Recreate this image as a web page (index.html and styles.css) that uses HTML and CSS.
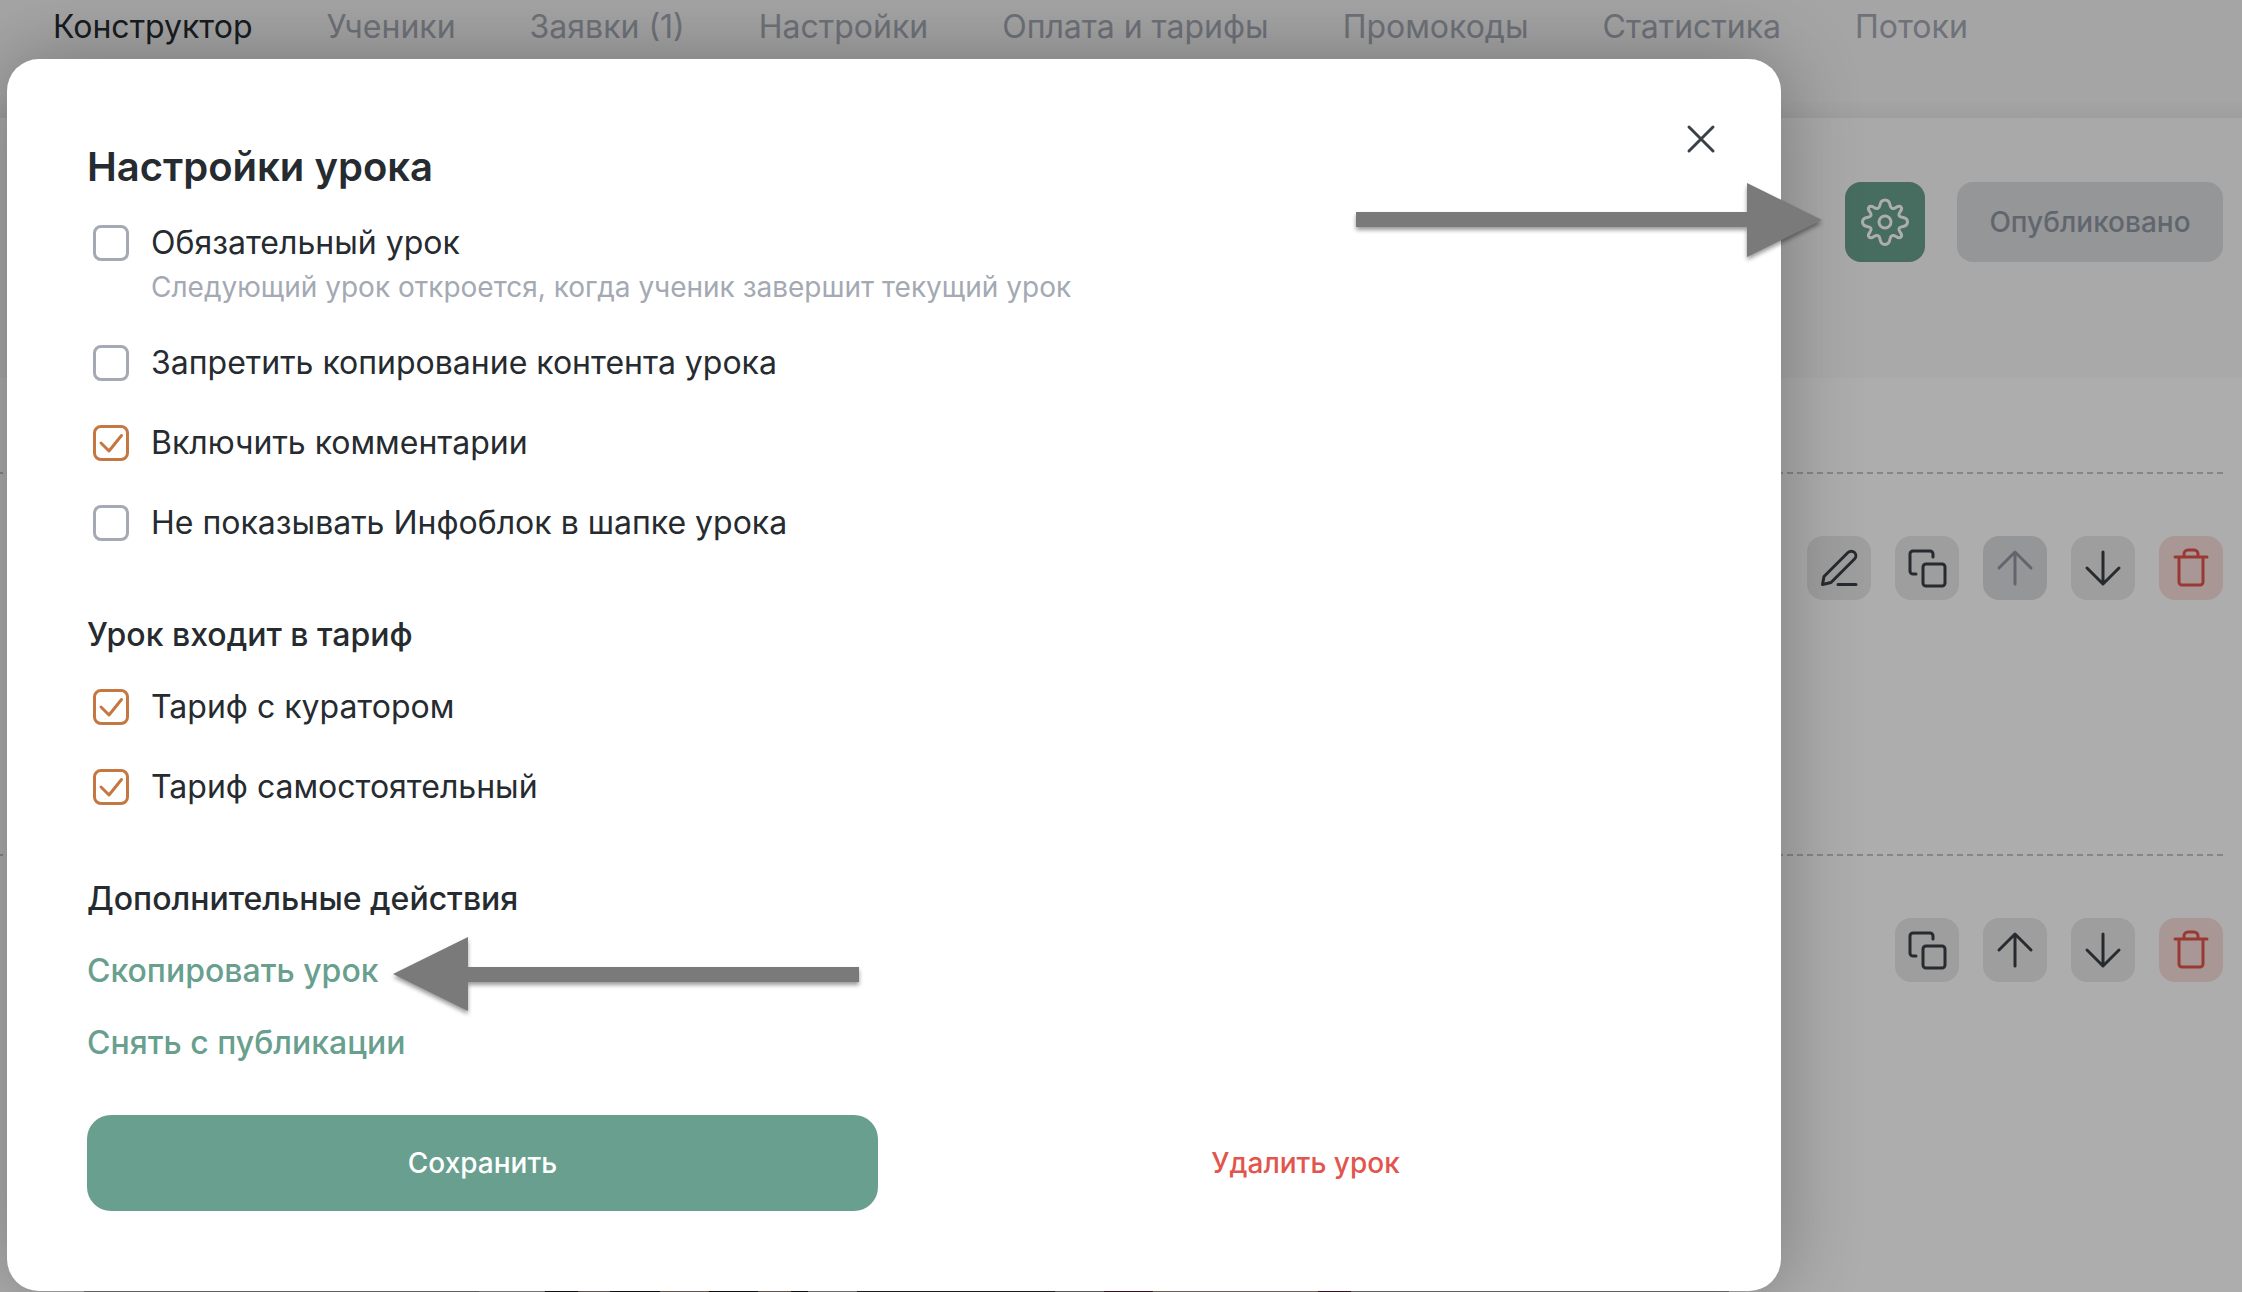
FILE: index.html
```
<!DOCTYPE html>
<html lang="ru">
<head>
<meta charset="UTF-8">
<meta name="viewport" content="width=device-width, initial-scale=1.0">
<title>Настройки урока</title>
<link rel="stylesheet" href="styles.css">
</head>
<body>

<!-- Icons -->
<svg class="sprite" aria-hidden="true">
  <symbol id="i-edit" viewBox="0 0 40 40">
    <path d="M3.500 36.500 L5 28.500 L29 4.500 C30.800 2.700 33.700 2.700 35.500 4.500 C37.300 6.300 37.300 9.200 35.500 11 L12 34.500 Z M19 36.500 H37"/>
  </symbol>
  <symbol id="i-copy" viewBox="0 0 40 40">
    <path d="M26 9 V6 a3 3 0 0 0 -3 -3 H6 a3 3 0 0 0 -3 3 V23 a3 3 0 0 0 3 3 H9"/>
    <rect x="16" y="16" width="22" height="22" rx="3"/>
  </symbol>
  <symbol id="i-up" viewBox="0 0 40 40">
    <path d="M20 36 V4 M4 20 L20 4 L36 20"/>
  </symbol>
  <symbol id="i-down" viewBox="0 0 40 40">
    <path d="M20 4 V36 M4 20 L20 36 L36 20"/>
  </symbol>
  <symbol id="i-trash" viewBox="0 0 40 40">
    <path d="M4 9 H36 M8 9 V34 a3 3 0 0 0 3 3 H29 a3 3 0 0 0 3 -3 V9 M13 9 V6 a4 4 0 0 1 4 -4 H23 a4 4 0 0 1 4 4 V9"/>
  </symbol>
</svg>

<div class="page">
  <nav class="tabs">
    <a href="#" class="tab active">Конструктор</a>
    <a href="#" class="tab">Ученики</a>
    <a href="#" class="tab">Заявки (1)</a>
    <a href="#" class="tab">Настройки</a>
    <a href="#" class="tab">Оплата и тарифы</a>
    <a href="#" class="tab">Промокоды</a>
    <a href="#" class="tab">Статистика</a>
    <a href="#" class="tab">Потоки</a>
  </nav>

  <div class="lesson-bar">
    <button type="button" class="gear" aria-label="Настройки">
      <svg viewBox="0 0 48 48">
        <path d="M24 2 C27 2 28.500 4 29 7 C29.600 10.500 32 11.500 35 9.500 C37.500 7.800 39.200 8.300 40 9 C40.800 9.800 41 11.500 39 14 C37 17 37.700 18.800 41 19.300 C44.500 19.800 46.500 21.500 46.500 24 C46.500 26.500 44.500 28.200 41 28.700 C37.700 29.200 37 31 39 34 C41 36.500 40.800 38.200 40 39 C39.200 39.800 37.500 40.200 35 38.500 C32 36.500 29.600 37.500 29 41 C28.500 44.500 27 46.500 24 46.500 C21 46.500 19.500 44.500 19 41 C18.400 37.500 16 36.500 13 38.500 C10.500 40.200 8.800 39.800 8 39 C7.200 38.200 7 36.500 9 34 C11 31 10.300 29.200 7 28.700 C3.500 28.200 1.500 26.500 1.500 24 C1.500 21.500 3.500 19.800 7 19.300 C10.300 18.800 11 17 9 14 C7 11.500 7.200 9.800 8 9 C8.800 8.300 10.500 7.800 13 9.500 C16 11.500 18.400 10.500 19 7 C19.500 4 21 2 24 2 Z"/>
        <circle cx="24" cy="24" r="6"/>
      </svg>
    </button>
    <button type="button" class="published" disabled>Опубликовано</button>
  </div>

  <div class="blocks">
    <section class="block">
      <button type="button" class="tool" aria-label="Редактировать"><svg><use href="#i-edit"/></svg></button>
      <button type="button" class="tool" aria-label="Копировать"><svg><use href="#i-copy"/></svg></button>
      <button type="button" class="tool" aria-label="Вверх" disabled><svg><use href="#i-up"/></svg></button>
      <button type="button" class="tool" aria-label="Вниз"><svg><use href="#i-down"/></svg></button>
      <button type="button" class="tool delete" aria-label="Удалить"><svg><use href="#i-trash"/></svg></button>
    </section>
    <section class="block">
      <button type="button" class="tool" aria-label="Копировать"><svg><use href="#i-copy"/></svg></button>
      <button type="button" class="tool" aria-label="Вверх"><svg><use href="#i-up"/></svg></button>
      <button type="button" class="tool" aria-label="Вниз"><svg><use href="#i-down"/></svg></button>
      <button type="button" class="tool delete" aria-label="Удалить"><svg><use href="#i-trash"/></svg></button>
    </section>
    <div class="cover"></div>
  </div>
</div>

<div class="overlay">
  <form class="modal">
    <button type="button" class="close" aria-label="Закрыть">
      <svg viewBox="0 0 32 32"><path d="M4 4 L28 28 M28 4 L4 28"/></svg>
    </button>

    <h1>Настройки урока</h1>
    <div class="options">
      <div class="option">
        <input type="checkbox" id="required">
        <label for="required">Обязательный урок</label>
        <p class="hint">Следующий урок откроется, когда ученик завершит текущий урок</p>
      </div>
      <div class="option">
        <input type="checkbox" id="nocopy">
        <label for="nocopy">Запретить копирование контента урока</label>
      </div>
      <div class="option">
        <input type="checkbox" id="comments" checked>
        <label for="comments">Включить комментарии</label>
      </div>
      <div class="option">
        <input type="checkbox" id="noinfo">
        <label for="noinfo">Не показывать Инфоблок в шапке урока</label>
      </div>
    </div>

    <h2>Урок входит в тариф</h2>
    <div class="options">
      <div class="option">
        <input type="checkbox" id="curator" checked>
        <label for="curator">Тариф с куратором</label>
      </div>
      <div class="option">
        <input type="checkbox" id="self" checked>
        <label for="self">Тариф самостоятельный</label>
      </div>
    </div>

    <h2>Дополнительные действия</h2>
    <div class="actions">
      <a href="#">Скопировать урок</a>
      <a href="#">Снять с публикации</a>
    </div>

    <div class="buttons">
      <button type="submit" class="save">Сохранить</button>
      <button type="button" class="remove">Удалить урок</button>
    </div>

    <!-- Pointers to the gear and to the copy link -->
    <svg class="arrow arrow-gear" viewBox="0 0 466 74"><path d="M0 29 H391 V0 L466 37 L391 74 V44 H0 Z"/></svg>
    <svg class="arrow arrow-copy" viewBox="0 0 466 74"><path d="M466 30 H75 V0 L0 37 L75 74 V45 H466 Z"/></svg>
  </form>
</div>

</body>
</html>
```
FILE: styles.css
```
* {
  box-sizing: border-box;
}

body {
  margin: 0;
  height: 100vh;
  overflow: hidden;
  position: relative;
  font-family: Inter, "Noto Sans", sans-serif;
  font-size: 32px;
  line-height: 40px;
  color: #262b30;
  background-color: #fff;
}

button {
  font: inherit;
  border: none;
  padding: 0;
  cursor: pointer;
}

a {
  text-decoration: none;
}

svg {
  display: block;
  fill: none;
  stroke: currentColor;
  stroke-width: 3;
  stroke-linecap: round;
  stroke-linejoin: round;
}

.sprite {
  position: absolute;
  width: 0;
  height: 0;
}

/* Page behind the modal */
.tabs {
  display: flex;
  gap: 74px;
  height: 118px;
  padding: 7px 53px;
  background: linear-gradient(#f3f3f3 85%, #e9e9e9);
}

.tab {
  color: #a4a9b3;
  white-space: nowrap;
}

.tab.active {
  color: #262b30;
}

.lesson-bar {
  display: flex;
  justify-content: flex-end;
  gap: 32px;
  height: 260px;
  padding: 64px 19px;
  background-color: #f9f9f9;
}

.gear {
  display: grid;
  place-items: center;
  width: 80px;
  height: 80px;
  border-radius: 16px;
  color: #fff;
  background-color: #699f8e;
}

.gear svg {
  width: 48px;
  height: 48px;
}

.published {
  min-width: 266px;
  height: 80px;
  padding: 0 32px;
  border-radius: 16px;
  font-size: 28px;
  font-weight: 500;
  color: #9097a1;
  background-color: #dbdee1;
}

.blocks {
  padding: 94px 19px 0 0;
}

.block {
  display: flex;
  justify-content: flex-end;
  gap: 24px;
  height: 382px;
  padding-top: 64px;
  background: repeating-linear-gradient(to left, #c6c6c6 0 6px, transparent 6px 10px) top / 100% 2px no-repeat;
}

.tool {
  display: grid;
  place-items: center;
  width: 64px;
  height: 64px;
  border-radius: 16px;
  color: #3a3f45;
  background-color: #e9e9e9;
}

.tool svg {
  width: 40px;
  height: 40px;
}

.tool:disabled {
  color: #9097a1;
  background-color: #dbdee1;
}

.tool.delete {
  color: #e2554d;
  background-color: #f9dfdd;
}

/* Top edge of the lesson picture */
.cover {
  width: 74%;
  height: 80px;
  margin-left: 84px;
  background: linear-gradient(to right,
    #a8a4a4 24%, #c8c8c8 24% 28%, #1d1d1d 28% 30%, #a8907c 30% 32%,
    #1d1d1d 32% 35%, #a8907c 35% 38%, #1d1d1d 38% 41%, #a8907c 41% 43%,
    #1d1d1d 43% 44%, #b8b8b8 44% 47%, #333 47% 59%, #9a9a9a 59% 62%,
    #641c37 62% 65%, #c2a497 65% 75%, #641c37 75% 77%, #a8a8a8 77%);
}

/* Modal */
.overlay {
  position: absolute;
  inset: 0;
  padding: 59px 461px 0 7px;
  background-color: rgba(0, 0, 0, 0.32);
}

.modal {
  position: relative;
  padding: 80px;
  border-radius: 32px;
  background-color: #fff;
  box-shadow: 0 0 80px rgba(0, 0, 0, 0.3);
}

.close {
  position: absolute;
  top: 64px;
  right: 64px;
  color: #3a4047;
  background: none;
}

.close svg {
  width: 32px;
  height: 32px;
}

h1 {
  margin: 0 0 28px;
  font-size: 40px;
  line-height: 56px;
  font-weight: 600;
}

h2 {
  margin: 72px 0 32px;
  font-size: 32px;
  line-height: 40px;
  font-weight: 500;
}

.options {
  display: flex;
  flex-direction: column;
  gap: 40px;
}

.option {
  display: grid;
  grid-template-columns: 36px 1fr;
  column-gap: 22px;
  align-items: center;
  padding-left: 6px;
}

.option input {
  appearance: none;
  width: 36px;
  height: 36px;
  margin: 0;
  border: 3px solid #a4a9b3;
  border-radius: 8px;
}

.option input:checked {
  border-color: #c57742;
  background: url("data:image/svg+xml,%3Csvg xmlns='http://www.w3.org/2000/svg' viewBox='0 0 30 30'%3E%3Cpath d='M5 15 L13 23 L25.500 7.500' fill='none' stroke='%23c57742' stroke-width='3' stroke-linecap='round' stroke-linejoin='round'/%3E%3C/svg%3E") center / 30px 30px no-repeat;
}

.hint {
  grid-column: 2;
  margin: 4px 0 -4px;
  font-size: 28px;
  color: #a4a9b3;
}

.actions {
  display: flex;
  flex-direction: column;
  align-items: flex-start;
  gap: 32px;
}

.actions a {
  font-weight: 500;
  color: #699f8e;
}

.buttons {
  display: grid;
  grid-template-columns: 1fr 1fr;
  gap: 32px;
  margin-top: 52px;
}

.save,
.remove {
  height: 96px;
  border-radius: 24px;
  font-size: 28px;
  font-weight: 500;
}

.save {
  color: #fff;
  background-color: #699f8e;
}

.remove {
  color: #e2554d;
  background: none;
}

.arrow {
  position: absolute;
  width: 466px;
  height: 74px;
  overflow: visible;
  fill: #7a7a7a;
  stroke: none;
  filter: drop-shadow(0 3px 2px rgba(0, 0, 0, 0.4));
}

.arrow-gear {
  top: 124px;
  right: -41px;
}

.arrow-copy {
  top: 878px;
  left: 386px;
}
```
